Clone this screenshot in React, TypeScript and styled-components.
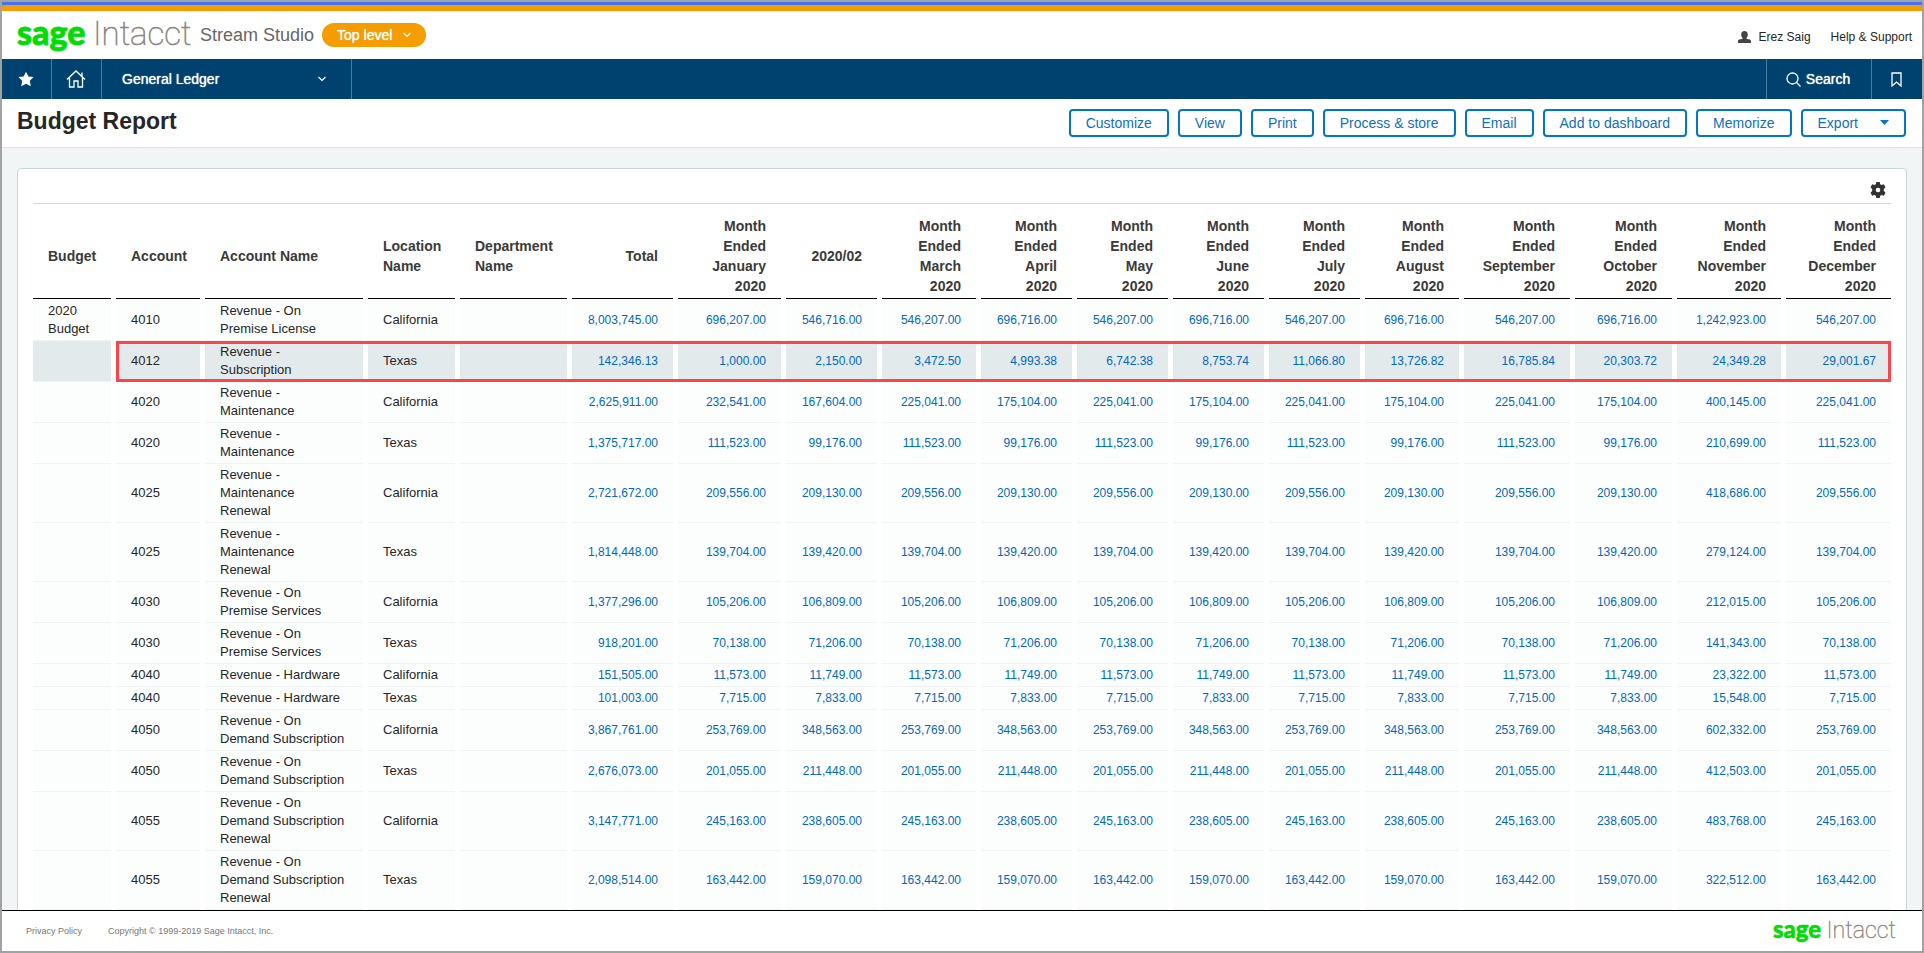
import React from "react";
import styled, { createGlobalStyle, css } from "styled-components";

const GlobalStyle = createGlobalStyle`
  *, *::before, *::after { box-sizing: border-box; }
  body {
    margin: 0;
    font-family: "Liberation Sans", Arial, sans-serif;
    font-size: 13px;
    line-height: 18px;
    color: #262626;
  }
  button, select { font-family: inherit; }
  a { color: inherit; text-decoration: none; }
`;

const medium = css`
  text-shadow: 0 0 1px currentColor;
`;

const Frame = styled.div`
  display: flex;
  flex-direction: column;
  height: 100vh;
  border: 2px solid #a2a2a4;
  background: #f1f5f6;
`;

const Stripe = styled.div`
  flex: none;
  height: 9px;
  background: #f59c00;
  border-top: 3px solid #3f74f6;
`;

const Header = styled.header`
  flex: none;
  display: flex;
  align-items: center;
  height: 48px;
  padding: 0 10px 0 15px;
  background: #fff;
`;

const LogoSvg = styled.svg`
  display: block;
  flex: none;
  overflow: visible;
`;

const Company = styled.span`
  margin: 0 8px 0 7px;
  font-size: 18px;
  color: #666;
`;

const LevelButton = styled.button`
  display: flex;
  align-items: center;
  gap: 11px;
  height: 24px;
  padding: 0 15px;
  border: 0;
  border-radius: 12px;
  background: #f59c00;
  color: #fff;
  font-size: 14px;
  ${medium}
`;

const UserLinks = styled.nav`
  display: flex;
  align-items: center;
  gap: 20px;
  margin-left: auto;
  padding-top: 4px;
  font-size: 12px;
`;

const UserLink = styled.a`
  display: flex;
  align-items: center;
  gap: 8px;
`;

const NavBar = styled.nav`
  flex: none;
  display: flex;
  height: 40px;
  background: #00426f;
`;

const NavButton = styled.button<{ $width: number; $side?: "right" }>`
  display: flex;
  align-items: center;
  justify-content: center;
  gap: 5px;
  width: ${(p) => p.$width}px;
  padding: 0 2px 0 0;
  border: 0 solid #4d7b9a;
  border-width: ${(p) => (p.$side === "right" ? "0 0 0 1px" : "0 1px 0 0")};
  background: none;
  color: #fff;
  font-size: 14px;
  ${medium}
`;

const ModuleButton = styled(NavButton)`
  justify-content: space-between;
  padding: 0 25px 0 20px;
`;

const NavSpacer = styled.div`
  flex: 1;
`;

const TitleBar = styled.div`
  flex: none;
  display: flex;
  align-items: center;
  justify-content: space-between;
  height: 49px;
  padding: 0 16px 1px 15px;
  background: #fff;
  border-bottom: 1px solid #dce3e5;
`;

const Title = styled.h1`
  margin: 0;
  padding-bottom: 3px;
  font-size: 23px;
  line-height: 30px;
  font-weight: 700;
`;

const Actions = styled.div`
  display: flex;
  gap: 9px;
`;

const ActionButton = styled.button`
  display: flex;
  align-items: center;
  gap: 22px;
  height: 28px;
  padding: 0 15px;
  border: 2px solid #0077c8;
  border-radius: 4px;
  background: #fff;
  color: #0f6fbf;
  font-size: 14px;
  white-space: nowrap;
`;

const Main = styled.main`
  flex: 1;
  min-height: 0;
  padding: 20px 15px;
  overflow: auto;
  scrollbar-width: none;
`;

const Card = styled.section`
  padding: 0 10px 20px;
  border: 1px solid #c9d5d9;
  border-radius: 4px;
  background: #fff;
`;

const CardTools = styled.div`
  display: flex;
  justify-content: flex-end;
  align-items: center;
  height: 35px;
  margin: 0 5px;
  padding-right: 5px;
  padding-top: 8px;
  border-bottom: 1px solid #ccd6d9;
`;

const IconButton = styled.button`
  display: flex;
  padding: 0;
  border: 0;
  background: none;
  color: #333;
`;

const Table = styled.table`
  width: 100%;
  table-layout: fixed;
  border-collapse: separate;
  border-spacing: 5px 0;
`;

const HeadCell = styled.th<{ $number?: boolean }>`
  padding: 12px 15px 2px;
  border-bottom: 1px solid #000;
  font-size: 14px;
  line-height: 20px;
  font-weight: 700;
  color: #3a3a3a;
  text-align: ${(p) => (p.$number ? "right" : "left")};
`;

const Cell = styled.td`
  padding: 2px 15px;
  border-bottom: 1px solid #f0f3f4;
  background: #fcfefe;
`;

const AmountCell = styled(Cell)`
  text-align: right;
  font-size: 12px;
  color: #0068be;
`;

const Row = styled.tr<{ $selected?: boolean }>`
  position: relative;

  &:first-child ${Cell} {
    padding-top: 3px;
  }

  ${(p) =>
    p.$selected &&
    css`
      ${Cell} {
        background: #e3eaec;
      }

      &::after {
        content: "";
        position: absolute;
        inset: 0 5px 0 83px;
        border: 3px solid #fb4548;
      }
    `}
`;

const Footer = styled.footer`
  flex: none;
  display: flex;
  align-items: center;
  gap: 26px;
  height: 41px;
  padding: 0 25px 0 24px;
  border-top: 1px solid #000;
  background: #fff;
  color: #777;
  font-size: 9px;
`;

const FooterLogo = styled.div`
  margin-left: auto;
`;

function Logo({ width }: { width: number }) {
  return (
    <LogoSvg width={width} height={(width * 36) / 176} viewBox="0 0 176 36" role="img" aria-label="sage Intacct">
      <text x="0" y="28" fontFamily="Lato" fontWeight="900" fontSize="34" fill="#00dc06" stroke="#00dc06" strokeWidth="0.8">sage</text>
      <text x="76" y="28" fontFamily="Roboto" fontWeight="100" fontSize="33" fill="#8c8780" stroke="#8c8780" strokeWidth="0.6">Intacct</text>
    </LogoSvg>
  );
}

const Chevron = () => (
  <svg width="8" height="6" viewBox="0 0 8 6" fill="none" stroke="#fff" strokeWidth="1.2" aria-hidden="true">
    <path d="M.5 1L4 4.500 7.500 1" />
  </svg>
);

interface Column {
  label: string;
  width: number;
  year?: string;
}

const columns: Column[] = [
  { label: "Budget", width: 78 },
  { label: "Account", width: 84 },
  { label: "Account Name", width: 158 },
  { label: "Location Name", width: 87 },
  { label: "Department Name", width: 107 },
  { label: "Total", width: 101 },
  { label: "Month Ended January", width: 103, year: "2020" },
  { label: "2020/02", width: 91 },
  { label: "Month Ended March", width: 94, year: "2020" },
  { label: "Month Ended April", width: 91, year: "2020" },
  { label: "Month Ended May", width: 91, year: "2020" },
  { label: "Month Ended June", width: 91, year: "2020" },
  { label: "Month Ended July", width: 91, year: "2020" },
  { label: "Month Ended August", width: 94, year: "2020" },
  { label: "Month Ended September", width: 106, year: "2020" },
  { label: "Month Ended October", width: 97, year: "2020" },
  { label: "Month Ended November", width: 104, year: "2020" },
  { label: "Month Ended December", width: 105, year: "2020" },
];

interface Line {
  account: string;
  name: string;
  location: string;
  amounts: string[];
  selected?: boolean;
}

/* Most accounts budget one amount for odd months and another for even ones. */
const alternating = (total: string, january: string, february: string, odd: string, even: string, november: string) => [
  total, january, february, odd, even, odd, even, odd, even, odd, even, november, odd,
];

const lines: Line[] = [
  { account: "4010", name: "Revenue - On Premise License", location: "California", amounts: alternating("8,003,745.00", "696,207.00", "546,716.00", "546,207.00", "696,716.00", "1,242,923.00") },
  {
    account: "4012", name: "Revenue - Subscription", location: "Texas", selected: true,
    amounts: ["142,346.13", "1,000.00", "2,150.00", "3,472.50", "4,993.38", "6,742.38", "8,753.74", "11,066.80", "13,726.82", "16,785.84", "20,303.72", "24,349.28", "29,001.67"],
  },
  { account: "4020", name: "Revenue - Maintenance", location: "California", amounts: alternating("2,625,911.00", "232,541.00", "167,604.00", "225,041.00", "175,104.00", "400,145.00") },
  { account: "4020", name: "Revenue - Maintenance", location: "Texas", amounts: alternating("1,375,717.00", "111,523.00", "99,176.00", "111,523.00", "99,176.00", "210,699.00") },
  { account: "4025", name: "Revenue - Maintenance Renewal", location: "California", amounts: alternating("2,721,672.00", "209,556.00", "209,130.00", "209,556.00", "209,130.00", "418,686.00") },
  { account: "4025", name: "Revenue - Maintenance Renewal", location: "Texas", amounts: alternating("1,814,448.00", "139,704.00", "139,420.00", "139,704.00", "139,420.00", "279,124.00") },
  { account: "4030", name: "Revenue - On Premise Services", location: "California", amounts: alternating("1,377,296.00", "105,206.00", "106,809.00", "105,206.00", "106,809.00", "212,015.00") },
  { account: "4030", name: "Revenue - On Premise Services", location: "Texas", amounts: alternating("918,201.00", "70,138.00", "71,206.00", "70,138.00", "71,206.00", "141,343.00") },
  { account: "4040", name: "Revenue - Hardware", location: "California", amounts: alternating("151,505.00", "11,573.00", "11,749.00", "11,573.00", "11,749.00", "23,322.00") },
  { account: "4040", name: "Revenue - Hardware", location: "Texas", amounts: alternating("101,003.00", "7,715.00", "7,833.00", "7,715.00", "7,833.00", "15,548.00") },
  { account: "4050", name: "Revenue - On Demand Subscription", location: "California", amounts: alternating("3,867,761.00", "253,769.00", "348,563.00", "253,769.00", "348,563.00", "602,332.00") },
  { account: "4050", name: "Revenue - On Demand Subscription", location: "Texas", amounts: alternating("2,676,073.00", "201,055.00", "211,448.00", "201,055.00", "211,448.00", "412,503.00") },
  { account: "4055", name: "Revenue - On Demand Subscription Renewal", location: "California", amounts: alternating("3,147,771.00", "245,163.00", "238,605.00", "245,163.00", "238,605.00", "483,768.00") },
  { account: "4055", name: "Revenue - On Demand Subscription Renewal", location: "Texas", amounts: alternating("2,098,514.00", "163,442.00", "159,070.00", "163,442.00", "159,070.00", "322,512.00") },
];

const actions = ["Customize", "View", "Print", "Process & store", "Email", "Add to dashboard", "Memorize"];

export default function App() {
  return (
    <Frame>
      <GlobalStyle />
      <Stripe />
      <Header>
        <Logo width={176} />
        <Company>Stream Studio</Company>
        <LevelButton type="button">Top level <Chevron /></LevelButton>
        <UserLinks aria-label="User">
          <UserLink href="#user">
            <svg width="13" height="12" viewBox="0 0 13 12" fill="#444" aria-hidden="true">
              <path d="M6.500 0C4.300 0 3.200 1.400 3.200 3.400c0 1.600.6 2.900 1.400 3.700v.6L1.300 8.600C.4 8.900 0 9.600 0 10.500V12h13v-1.500c0-.9-.4-1.600-1.300-1.900L8.400 7.700v-.6c.8-.8 1.400-2.100 1.400-3.700C9.800 1.400 8.700 0 6.500 0z" />
            </svg>
            Erez Saig
          </UserLink>
          <UserLink href="#help">Help &amp; Support</UserLink>
        </UserLinks>
      </Header>
      <NavBar aria-label="Applications">
        <NavButton type="button" $width={50} aria-label="Favorites">
          <svg width="16" height="16" viewBox="0 0 16 16" fill="#fff" aria-hidden="true">
            <path d="M8 .8l2.400 4.600 5.100.7-3.700 3.700 1 5.400L8 12.800l-4.800 2.400 1-5.400L.5 6.100l5.100-.7z" />
          </svg>
        </NavButton>
        <NavButton type="button" $width={50} aria-label="Home">
          <svg width="20" height="18" viewBox="0 0 20 18" fill="none" stroke="#fff" strokeWidth="1.300" aria-hidden="true">
            <path d="M1 9.500l9-8.500 9 8.500M3.500 7.500v9.500h4.500v-6h4v6h4.500V7.500M16 6.500V2.500" />
          </svg>
        </NavButton>
        <ModuleButton type="button" $width={250}>General Ledger <Chevron /></ModuleButton>
        <NavSpacer />
        <NavButton type="button" $width={105} $side="right">
          <svg width="15" height="15" viewBox="0 0 15 15" fill="none" stroke="#fff" strokeWidth="1.300" aria-hidden="true">
            <circle cx="6.500" cy="6.500" r="5.500" />
            <path d="M10.300 10.300l4.200 4.200" />
          </svg>
          Search
        </NavButton>
        <NavButton type="button" $width={51} $side="right" aria-label="Bookmarks">
          <svg width="11" height="15" viewBox="0 0 11 15" fill="none" stroke="#fff" strokeWidth="1.300" aria-hidden="true">
            <path d="M1 1h9v13l-4.500-4L1 14z" />
          </svg>
        </NavButton>
      </NavBar>
      <TitleBar>
        <Title>Budget Report</Title>
        <Actions>
          {actions.map((a) => (
            <ActionButton type="button" key={a}>{a}</ActionButton>
          ))}
          <ActionButton type="button">
            Export
            <svg width="9" height="5" viewBox="0 0 9 5" fill="#0077c8" aria-hidden="true"><path d="M0 0h9L4.500 5z" /></svg>
          </ActionButton>
        </Actions>
      </TitleBar>
      <Main>
        <Card>
          <CardTools>
            <IconButton type="button" aria-label="Report settings">
              <svg width="16" height="16" viewBox="0 0 16 16" fill="currentColor" fillRule="evenodd" aria-hidden="true">
                <path d="M6.300 0h3.400l.5 2.200 1.400.8 2.200-.7 1.700 3-1.700 1.600v2.200l1.700 1.600-1.700 3-2.200-.7-1.400.8L9.700 16H6.300l-.5-2.200-1.400-.8-2.200.7-1.700-3 1.700-1.600V6.900L.5 5.300l1.700-3 2.200.7 1.400-.8zM8 5.700a2.300 2.300 0 100 4.600 2.300 2.300 0 000-4.600z" />
              </svg>
            </IconButton>
          </CardTools>
          <Table>
            <colgroup>
              {columns.map((c) => (
                <col key={c.label} style={{ width: c.width }} />
              ))}
            </colgroup>
            <thead>
              <tr>
                {columns.map((c, i) => (
                  <HeadCell key={c.label} scope="col" $number={i > 4}>
                    {c.label}
                    {c.year && <><br />{c.year}</>}
                  </HeadCell>
                ))}
              </tr>
            </thead>
            <tbody>
              {lines.map((line, i) => (
                <Row key={line.account + line.location} $selected={line.selected}>
                  <Cell>{i === 0 ? "2020 Budget" : ""}</Cell>
                  <Cell>{line.account}</Cell>
                  <Cell>{line.name}</Cell>
                  <Cell>{line.location}</Cell>
                  <Cell />
                  {line.amounts.map((amount, j) => (
                    <AmountCell key={j}><a href="#detail">{amount}</a></AmountCell>
                  ))}
                </Row>
              ))}
            </tbody>
          </Table>
        </Card>
      </Main>
      <Footer>
        <a href="#privacy">Privacy Policy</a>
        <span>Copyright © 1999-2019 Sage Intacct, Inc.</span>
        <FooterLogo><Logo width={124} /></FooterLogo>
      </Footer>
    </Frame>
  );
}
